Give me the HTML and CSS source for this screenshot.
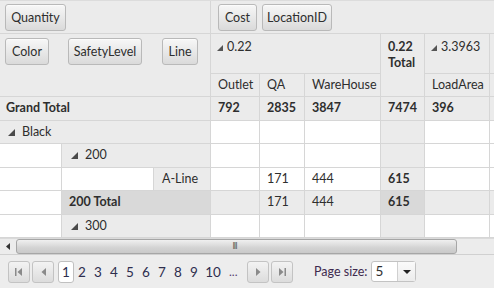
FILE: index.html
```html
<!DOCTYPE html>
<html>
<head>
<meta charset="utf-8">
<link rel="stylesheet" href="styles.css">
</head>
<body>
<div class="pivot">
  <div class="top">
    <div class="left-head">
      <div class="measures"><span class="field f-qty">Quantity</span></div>
      <div class="rowfields">
        <span class="field f-color">Color</span>
        <span class="field f-safety">SafetyLevel</span>
        <span class="field f-line">Line</span>
      </div>
    </div>
    <div class="right-head">
      <div class="colfields">
        <span class="field f-cost">Cost</span>
        <span class="field f-loc">LocationID</span>
      </div>
      <div class="colheaders">
        <div class="ch span3"><svg class="tri" width="6" height="6" viewBox="0 0 6 6"><polygon points="6,0 6,6 0,6"/></svg>0.22</div>
        <div class="ch total rows2 bold">0.22<br>Total</div>
        <div class="ch"><svg class="tri" width="6" height="6" viewBox="0 0 6 6"><polygon points="6,0 6,6 0,6"/></svg>3.3963</div>
        <div class="ch"></div>
        <div class="ch low">Outlet</div>
        <div class="ch low">QA</div>
        <div class="ch low">WareHouse</div>
        <div class="ch low">LoadArea</div>
        <div class="ch low"></div>
      </div>
    </div>
  </div>
  <div class="body">
    <div class="rowheaders">
      <div class="rh span3 grey bold gt">Grand Total</div>
      <div class="rh span3 grey exp1"><svg class="tri" width="7" height="7" viewBox="0 0 7 7"><polygon points="7,0 7,7 0,7"/></svg>Black</div>
      <div class="rh"></div>
      <div class="rh span2 grey exp2"><svg class="tri" width="7" height="7" viewBox="0 0 7 7"><polygon points="7,0 7,7 0,7"/></svg>200</div>
      <div class="rh"></div>
      <div class="rh"></div>
      <div class="rh grey leaf">A-Line</div>
      <div class="rh"></div>
      <div class="rh span2 dark bold sub">200 Total</div>
      <div class="rh"></div>
      <div class="rh span2 grey exp2"><svg class="tri" width="7" height="7" viewBox="0 0 7 7"><polygon points="7,0 7,7 0,7"/></svg>300</div>
    </div>
    <div class="data">
      <div class="d grey bold">792</div><div class="d grey bold">2835</div><div class="d grey bold">3847</div><div class="d grey bold">7474</div><div class="d grey bold">396</div><div class="d grey"></div>
      <div class="d"></div><div class="d"></div><div class="d"></div><div class="d grey"></div><div class="d"></div><div class="d"></div>
      <div class="d"></div><div class="d"></div><div class="d"></div><div class="d grey"></div><div class="d"></div><div class="d"></div>
      <div class="d"></div><div class="d">171</div><div class="d">444</div><div class="d grey bold">615</div><div class="d"></div><div class="d"></div>
      <div class="d grey"></div><div class="d grey">171</div><div class="d grey">444</div><div class="d dark bold">615</div><div class="d grey"></div><div class="d grey"></div>
      <div class="d"></div><div class="d"></div><div class="d"></div><div class="d grey"></div><div class="d"></div><div class="d"></div>
    </div>
  </div>
  <div class="hscroll">
    <span class="sarrow"><svg width="4" height="7" viewBox="0 0 4 7"><polygon points="4,0 4,7 0,3.5"/></svg></span>
    <span class="thumb"><span class="grip">III</span></span>
  </div>
  <div class="pager">
    <span class="pbtn"><svg width="8" height="8" viewBox="0 0 8 8"><rect x="0" y="0" width="1.5" height="8"/><polygon points="7,0 7,8 2.5,4"/></svg></span>
    <span class="pbtn prev"><svg width="5" height="8" viewBox="0 0 5 8"><polygon points="5,0 5,8 0.5,4"/></svg></span>
    <span class="pages">
      <span class="pg cur">1</span><span class="pg">2</span><span class="pg">3</span><span class="pg">4</span><span class="pg">5</span><span class="pg">6</span><span class="pg">7</span><span class="pg">8</span><span class="pg">9</span><span class="pg ten">10</span><span class="pg more">...</span>
    </span>
    <span class="pbtn"><svg width="5" height="8" viewBox="0 0 5 8"><polygon points="0,0 0,8 4.5,4"/></svg></span>
    <span class="pbtn last"><svg width="8" height="8" viewBox="0 0 8 8"><polygon points="1,0 1,8 5.5,4"/><rect x="6.5" y="0" width="1.5" height="8"/></svg></span>
    <span class="psize">Page size:</span>
    <span class="dd"><span class="ddval">5</span><span class="ddarrow"><svg width="8" height="4" viewBox="0 0 8 4"><polygon points="0,0 8,0 4,4"/></svg></span></span>
  </div>
</div>
</body>
</html>
```
FILE: styles.css
```css
* { box-sizing: border-box; margin: 0; padding: 0; }
body {
  margin: 0;
  width: 494px;
  height: 288px;
  overflow: hidden;
  font-family: Lato, "Open Sans", sans-serif;
  font-size: 12.5px;
  color: #2e2e2e;
  background: #fff;
}
.pivot { border-top: 1px solid #dcdcdc; }
.top {
  display: flex;
  height: 96px;
  border-bottom: 1px solid #d6d6d6;
}
.left-head {
  width: 211px;
  flex: none;
  border-right: 1px solid #d6d6d6;
  background: #ebebeb;
}
.measures {
  height: 33px;
  border-bottom: 1px solid #d6d6d6;
  padding: 3px 0 0 5px;
}
.rowfields {
  display: flex;
  padding: 4px 0 0 5px;
}
.field {
  display: inline-flex;
  align-items: center;
  justify-content: center;
  height: 27px;
  border: 1px solid #b9b9b9;
  border-radius: 3px;
  background: linear-gradient(#f7f7f7, #dadada);
  box-shadow: inset 0 1px 0 rgba(255,255,255,0.6);
  white-space: nowrap;
  font-size: 12.5px;
}
.f-qty { width: 61px; }
.f-color { width: 44px; }
.f-safety { width: 74px; margin-left: 19px; }
.f-line { width: 36px; margin-left: 20px; }
.f-cost { width: 39px; }
.f-loc { width: 70px; }
.right-head {
  flex: 1;
  min-width: 0;
  overflow: hidden;
}
.colfields {
  height: 33px;
  border-bottom: 1px solid #d6d6d6;
  background: #ebebeb;
  display: flex;
  gap: 5px;
  padding: 3px 0 0 7px;
}
.colheaders {
  display: grid;
  grid-template-columns: 49px 45px 76px 44px 65px 60px;
  grid-template-rows: 40px 22px;
  background: #ebebeb;
}
.ch {
  border-right: 1px solid #d6d6d6;
  padding: 5px 0 0 6px;
  white-space: nowrap;
}
.ch.span3 { grid-column: span 3; border-bottom: 1px solid #d6d6d6; }
.ch.rows2 { grid-row: span 2; padding: 5px 0 0 7px; line-height: 16px; }
.ch:nth-child(3), .ch:nth-child(4) { border-bottom: 1px solid #d6d6d6; }
.ch.low { padding: 3px 0 0 7px; }
.tri {
  fill: #555;
  margin-right: 4px;
  vertical-align: 0px;
}
.rh .tri { margin-right: 7px; fill: #4a4a4a; }
.bold { font-weight: 700; }
.body {
  display: flex;
  height: 141px;
  overflow: hidden;
}
.rowheaders {
  width: 211px;
  flex: none;
  border-right: 1px solid #d6d6d6;
  display: grid;
  grid-template-columns: 62px 92px 56px;
  grid-auto-rows: 23.5px;
}
.rh {
  border-bottom: 1px solid #d6d6d6;
  border-right: 1px solid #d6d6d6;
  padding: 3px 0 0 7px;
  white-space: nowrap;
}
.rh.span3 { grid-column: span 3; border-right: 0; }
.rh.span2 { grid-column: span 2; border-right: 0; }
.rh.leaf { border-right: 0; padding-left: 8px; }
.rh.gt { padding-left: 6px; }
.rh.exp1 { padding-left: 8px; }
.rh.exp2 { padding-left: 9px; }
.grey { background: #ebebeb; }
.dark { background: #d9d9d9; }
.data {
  flex: 1;
  min-width: 0;
  display: grid;
  grid-template-columns: 49px 45px 76px 44px 65px 60px;
  grid-auto-rows: 23.5px;
}
.d {
  border-right: 1px solid #d6d6d6;
  border-bottom: 1px solid #d6d6d6;
  padding: 3px 0 0 7px;
}
.hscroll {
  height: 17px;
  display: flex;
  align-items: center;
  background: #ececec;
  border-top: 1px solid #dadada;
  border-bottom: 1px solid #d0d0d0;
}
.sarrow {
  width: 16px;
  display: flex;
  justify-content: center;
  fill: #333;
}
.thumb {
  width: 441px;
  height: 15px;
  border: 1px solid #a6a6a6;
  border-radius: 3px;
  background: linear-gradient(#f0f0f0, #d3d3d3 60%, #c9c9c9);
  display: flex;
  align-items: center;
  justify-content: center;
}
.grip {
  font-family: "DejaVu Sans", sans-serif;
  font-size: 8px;
  letter-spacing: -1px;
  color: #555;
  margin-left: -4px;
}
.pager {
  height: 33px;
  background: #ededed;
  display: flex;
  align-items: center;
  padding-left: 8px;
}
.pbtn {
  width: 22px;
  height: 22px;
  display: flex;
  align-items: center;
  justify-content: center;
  border: 1px solid #c3c3c3;
  border-radius: 3px;
  background: linear-gradient(#f3f3f3, #dcdcdc);
  fill: #8a8a8a;
  margin-right: 2px;
}
.pbtn.prev { margin-right: 4px; }
.pages { display: flex; align-items: center; margin-right: 5px; }
.pg {
  min-width: 16px;
  height: 22px;
  display: flex;
  align-items: center;
  justify-content: center;
  font-size: 13.5px;
  color: #2e2e4e;
}
.pg.cur {
  background: #fff;
  border: 1px solid #c0c0c0;
  border-radius: 3px;
}
.pg.ten { min-width: 22px; }
.pg.more {
  width: 18px;
  justify-content: flex-start;
  padding-left: 5px;
  font-size: 12px;
  color: #553a70;
}
.psize {
  margin-left: 19px;
  font-size: 12.5px;
  color: #3e2a4e;
}
.dd {
  margin-left: 4px;
  width: 45px;
  height: 21px;
  display: flex;
  background: #fff;
  border: 1px solid #c3c3c3;
  border-radius: 3px;
}
.ddval { flex: 1; padding-left: 3px; font-size: 13.5px; line-height: 19px; }
.ddarrow {
  width: 18px;
  border-left: 1px solid #d0d0d0;
  display: flex;
  align-items: center;
  justify-content: center;
  fill: #222;
  background: linear-gradient(#fafafa, #ececec);
}
```
